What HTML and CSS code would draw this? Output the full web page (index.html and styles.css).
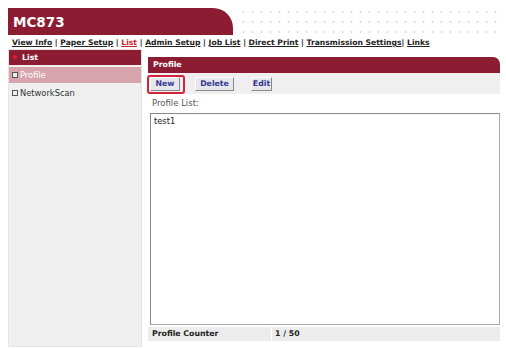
FILE: index.html
```html
<!DOCTYPE html>
<html lang="en">
<head>
    <meta charset="UTF-8">
    <meta name="viewport" content="width=device-width, initial-scale=1.0">
    <title>MC873</title>
    <link rel="stylesheet" href="styles.css">
</head>
<body>
    <div class="page">
        <div class="top">
            <div class="banner">MC873</div>
            <div class="dots"></div>
        </div>

        <div class="nav">
            <a href="#">View Info</a> | <a href="#">Paper Setup</a> | <a href="#" class="current">List</a> | <a href="#">Admin Setup</a> | <a href="#">Job List</a> | <a href="#">Direct Print</a> | <a href="#">Transmission Settings</a>| <a href="#">Links</a>
        </div>

        <div class="body">
            <div class="side">
                <div class="side-head"><span class="bullet"></span>List</div>
                <div class="side-item active"><span class="box"></span>Profile</div>
                <div class="side-item"><span class="box"></span>NetworkScan</div>
            </div>

            <div class="main">
                <div class="main-head">Profile</div>
                <div class="toolbar">
                    <button class="btn btn-new">New</button>
                    <button class="btn btn-delete">Delete</button>
                    <button class="btn btn-edit">Edit</button>
                    <div class="mark"></div>
                </div>
                <div class="label">Profile List:</div>
                <div class="listbox">test1</div>
                <div class="counter">
                    <div class="counter-name">Profile Counter</div>
                    <div class="counter-value">1 / 50</div>
                </div>
            </div>
        </div>
    </div>
</body>
</html>
```

FILE: styles.css
```css
body {
    margin: 0;
    background: #fff;
    font-family: "DejaVu Sans", Verdana, sans-serif;
    color: #333;
}

.page {
    padding: 8px 6px 0 8px;
}

.top {
    display: flex;
    height: 27px;
}

.banner {
    width: 220px;
    padding-left: 5px;
    background: #8b1c31;
    color: #fff;
    font-size: 13.5px;
    font-weight: bold;
    line-height: 28px;
    border-top-right-radius: 20px;
}

.dots {
    flex: 1;
    margin-left: 4px;
    background-image: radial-gradient(circle, #d6d6d6 0.8px, transparent 1.2px);
    background-size: 9px 10px;
    background-position: 2px -1px;
}

.nav {
    margin-top: 2px;
    padding-left: 4px;
    font-size: 7.65px;
    font-weight: bold;
    line-height: 12px;
    color: #222;
    white-space: nowrap;
}

.nav a {
    color: #222;
    text-decoration: underline;
}

.nav a.current {
    color: #d0202e;
}

.body {
    display: flex;
    margin-top: 0;
}

.side {
    width: 132px;
    height: 296px;
    background: #efefef;
    border: 1px solid #e4e4e4;
}

.side-head {
    height: 15px;
    background: #8b1c31;
    color: #fff;
    font-size: 7.8px;
    font-weight: bold;
    line-height: 15px;
    padding-left: 4px;
}

.bullet {
    display: inline-block;
    width: 4px;
    height: 4px;
    border-radius: 50%;
    background: #e02030;
    margin-right: 5px;
    vertical-align: 1px;
}

.side-item {
    height: 16px;
    margin-top: 2px;
    padding-left: 3px;
    font-size: 8.3px;
    line-height: 16px;
    color: #333;
}

.side-item.active {
    background: #d7a3ac;
    color: #fff;
}

.box {
    display: inline-block;
    width: 4px;
    height: 4px;
    border: 1px solid #555;
    margin-right: 2px;
    vertical-align: 0;
}

.side-item.active .box {
    border-color: #555;
    background: #eee;
}

.main {
    flex: 1;
    margin-left: 6px;
    margin-top: 8px;
}

.main-head {
    height: 16px;
    background: #8b1c31;
    color: #fff;
    font-size: 7.8px;
    font-weight: bold;
    line-height: 16px;
    padding-left: 5px;
    border-top-right-radius: 7px;
}

.toolbar {
    position: relative;
    display: flex;
    align-items: center;
    height: 21px;
    background: #efefef;
    padding-left: 2px;
}

.btn {
    height: 14px;
    padding: 0;
    background: #e6e6ec;
    border: 1px solid;
    border-color: #fff #888 #888 #fff;
    color: #363690;
    font-family: "DejaVu Sans", Verdana, sans-serif;
    font-size: 7.8px;
    font-weight: bold;
}

.btn-new {
    width: 30px;
}

.btn-delete {
    width: 39px;
    margin-left: 15px;
}

.btn-edit {
    width: 21px;
    margin-left: 17px;
}

.mark {
    position: absolute;
    left: -1px;
    top: 2px;
    width: 34px;
    height: 15px;
    border: 2px solid #d3223c;
    border-radius: 3px;
}

.label {
    margin-top: 3px;
    padding-left: 4px;
    font-size: 8.5px;
    line-height: 13px;
    color: #555;
}

.listbox {
    height: 206px;
    margin: 3px 0 0 2px;
    padding: 2px 3px;
    border: 1px solid #aaa;
    border-top-color: #888;
    border-left-color: #888;
    background: #fff;
    font-size: 8.3px;
    line-height: 10px;
    color: #222;
}

.counter {
    display: grid;
    grid-template-columns: 124px 1fr;
    margin-top: 2px;
    height: 14px;
    font-size: 7.8px;
    font-weight: bold;
    line-height: 14px;
    color: #222;
}

.counter-name {
    background: #ececec;
    padding-left: 4px;
    margin-right: 1px;
}

.counter-value {
    background: #ececec;
    padding-left: 3px;
}
```
